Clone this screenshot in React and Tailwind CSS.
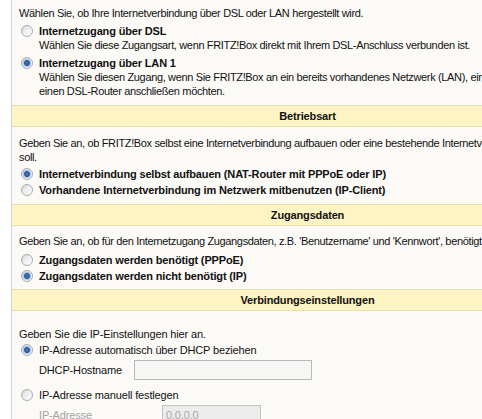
import React from 'react';

function Radio({ checked }) {
  return (
    <span className="flex items-center justify-center w-[12px] h-[12px] shrink-0 rounded-full border border-[#a7adb4] bg-linear-to-br from-[#d4d6d8] via-[#eef0f1] to-[#ffffff]">
      {checked && (
        <span className="w-[6px] h-[6px] rounded-full bg-[#3d6fae] border border-[#27508a] shadow-[0_0_1px_1px_#9fc0e6]"></span>
      )}
    </span>
  );
}

function Option({ checked, label, children, className = '' }) {
  return (
    <div className={'flex items-start ' + className}>
      <div className="h-[14px] flex items-center ml-[2px]">
        <Radio checked={checked} />
      </div>
      <div className="ml-[6px] whitespace-nowrap">
        <div className="font-bold leading-[14px] tracking-[-0.15px]">{label}</div>
        {children && <div className="leading-[14px]">{children}</div>}
      </div>
    </div>
  );
}

function RadioRow({ checked, label, bold = true }) {
  return (
    <div className="flex items-center h-[16px] whitespace-nowrap">
      <span className="ml-[2px]">
        <Radio checked={checked} />
      </span>
      <span className={'ml-[6px] leading-[16px] ' + (bold ? 'font-bold tracking-[-0.15px]' : '')}>{label}</span>
    </div>
  );
}

function Header({ title }) {
  return (
    <div className="h-[22px] border-y border-[#e9dfa8] bg-[#fdf3c3] flex items-center justify-center font-bold tracking-[-0.15px]">
      {title}
    </div>
  );
}

export default function App() {
  return (
    <div className="w-[482px] h-[419px] overflow-hidden bg-white pl-[11px] font-['Liberation_Sans',Arial,sans-serif] text-[11px] text-[#111] tracking-[-0.35px]">
      <div className="w-[592px] h-full border-l border-[#d8d5cd] bg-[#fbfaf7]">
        <div className="pl-[7px] pt-[6px] pb-[7px]">
          <p className="leading-[14px] whitespace-nowrap">Wählen Sie, ob Ihre Internetverbindung über DSL oder LAN hergestellt wird.</p>
          <Option className="mt-[4px]" label="Internetzugang über DSL">
            Wählen Sie diese Zugangsart, wenn FRITZ!Box direkt mit Ihrem DSL-Anschluss verbunden ist.
          </Option>
          <Option className="mt-[4px]" checked label="Internetzugang über LAN 1">
            Wählen Sie diesen Zugang, wenn Sie FRITZ!Box an ein bereits vorhandenes Netzwerk (LAN), ein zusätzliches Modem oder
            <br />
            einen DSL-Router anschließen möchten.
          </Option>
        </div>

        <Header title="Betriebsart" />
        <div className="pl-[7px] pt-[9px] pb-[6px]">
          <p className="leading-[14px] whitespace-nowrap">
            Geben Sie an, ob FRITZ!Box selbst eine Internetverbindung aufbauen oder eine bestehende Internetverbindung mitbenutzen
            <br />
            soll.
          </p>
          <div className="mt-[2px]">
            <RadioRow checked label="Internetverbindung selbst aufbauen (NAT-Router mit PPPoE oder IP)" />
            <RadioRow label="Vorhandene Internetverbindung im Netzwerk mitbenutzen (IP-Client)" />
          </div>
        </div>

        <Header title="Zugangsdaten" />
        <div className="pl-[7px] pt-[8px] pb-[5px]">
          <p className="leading-[14px] whitespace-nowrap">
            Geben Sie an, ob für den Internetzugang Zugangsdaten, z.B. 'Benutzername' und 'Kennwort', benötigt werden.
          </p>
          <div className="mt-[4px]">
            <RadioRow label="Zugangsdaten werden benötigt (PPPoE)" />
            <RadioRow checked label="Zugangsdaten werden nicht benötigt (IP)" />
          </div>
        </div>

        <Header title="Verbindungseinstellungen" />
        <div className="pl-[7px] pt-[16px] tracking-[-0.15px]">
          <p className="leading-[14px]">Geben Sie die IP-Einstellungen hier an.</p>
          <div className="mt-[1px]">
            <RadioRow checked bold={false} label="IP-Adresse automatisch über DHCP beziehen" />
          </div>
          <div className="flex items-center mt-[2px] pl-[20px]">
            <span className="w-[95px] leading-[20px]">DHCP-Hostname</span>
            <input
              type="text"
              className="w-[178px] h-[20px] border border-[#b7b9bc] bg-[#f6f6f5] px-[3px] text-[11px] outline-none"
            />
          </div>
          <div className="mt-[7px]">
            <RadioRow bold={false} label="IP-Adresse manuell festlegen" />
          </div>
          <div className="flex items-center mt-[2px] pl-[20px] text-[#a3a3a3]">
            <span className="w-[123px] leading-[20px]">IP-Adresse</span>
            <input
              type="text"
              disabled
              value="0.0.0.0"
              readOnly
              className="w-[99px] h-[20px] border border-[#c2c2c2] bg-[#ececec] px-[3px] text-[11px] text-[#a8a8a8]"
            />
          </div>
        </div>
      </div>
    </div>
  );
}
